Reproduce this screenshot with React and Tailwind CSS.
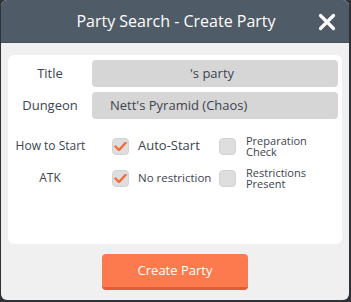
import React from "react";

function Check({ checked }) {
  return (
    <div className="w-[17px] h-[17px] rounded-[4px] bg-[#dedede] border border-[#d2d2d2] flex items-center justify-center shrink-0">
      {checked && (
        <svg width="13" height="11" viewBox="0 0 13 11">
          <path d="M1.5 5.5 L5 9 L11.5 2" fill="none" stroke="#f06b3c" strokeWidth="2.4" strokeLinecap="round" strokeLinejoin="round" />
        </svg>
      )}
    </div>
  );
}

export default function App() {
  return (
    <div className="w-[351px] h-[302px] bg-[#2e3236] pl-[1px] pr-[2px] pb-[2px]" style={{ fontFamily: '"Open Sans", "Noto Sans", sans-serif' }}>
      <div className="h-full rounded-[6px] overflow-hidden flex flex-col bg-[#f0f0f0]">
        <div className="h-[43px] bg-[#4f5b67] relative flex items-center justify-center shrink-0 border-b border-[#46505a]">
          <span className="text-white text-[16px] ml-[2px]">Party Search - Create Party</span>
          <svg className="absolute right-[13px] top-[13px]" width="18" height="18" viewBox="0 0 18 18">
            <path d="M2.5 2.5 L15.5 15.5 M15.5 2.5 L2.5 15.5" stroke="white" strokeWidth="3.2" strokeLinecap="round" />
          </svg>
        </div>
        <div className="flex-1 flex flex-col px-[7px] pt-[12px]">
          <div className="h-[189px] bg-white rounded-[6px] pr-[4px] pt-[5px] flex flex-col">
            <div className="flex items-center h-[27px]">
              <div className="w-[84px] text-center text-[13px] text-[#3d4450]">Title</div>
              <div className="flex-1 h-[27px] rounded-[4px] bg-[#d6d6d6] flex items-center justify-center text-[13px] text-[#3d4450] pr-[6px]">'s party</div>
            </div>
            <div className="flex items-center h-[27px] mt-[5px]">
              <div className="w-[84px] text-center text-[13px] text-[#3d4450]">Dungeon</div>
              <div className="flex-1 h-[27px] rounded-[4px] bg-[#d6d6d6] flex items-center pl-[18px] text-[13px] text-[#3d4450]">Nett's Pyramid (Chaos)</div>
            </div>
            <div className="flex items-center h-[32px] mt-[11px]">
              <div className="w-[84px] text-center text-[12px] text-[#3d4450] pl-[1px]">How to Start</div>
              <div className="ml-[20px] flex items-center w-[107px]">
                <Check checked />
                <span className="ml-[9px] text-[13px] text-[#3d4450]">Auto-Start</span>
              </div>
              <Check />
              <span className="ml-[10px] text-[11px] leading-[11px] text-[#3d4450]">Preparation<br />Check</span>
            </div>
            <div className="flex items-center h-[32px]">
              <div className="w-[84px] text-center text-[12px] text-[#3d4450]">ATK</div>
              <div className="ml-[20px] flex items-center w-[107px]">
                <Check checked />
                <span className="ml-[9px] text-[11.5px] text-[#3d4450]">No restriction</span>
              </div>
              <Check />
              <span className="ml-[10px] text-[11px] leading-[11px] text-[#3d4450]">Restrictions<br />Present</span>
            </div>
          </div>
          <div className="flex justify-center mt-[10px]">
            <div className="w-[146px] h-[36px] rounded-[4px] bg-[#fd7a4f] border-b-[3px] border-[#d9603a] flex items-center justify-center text-white text-[13px]">Create Party</div>
          </div>
        </div>
      </div>
    </div>
  );
}
